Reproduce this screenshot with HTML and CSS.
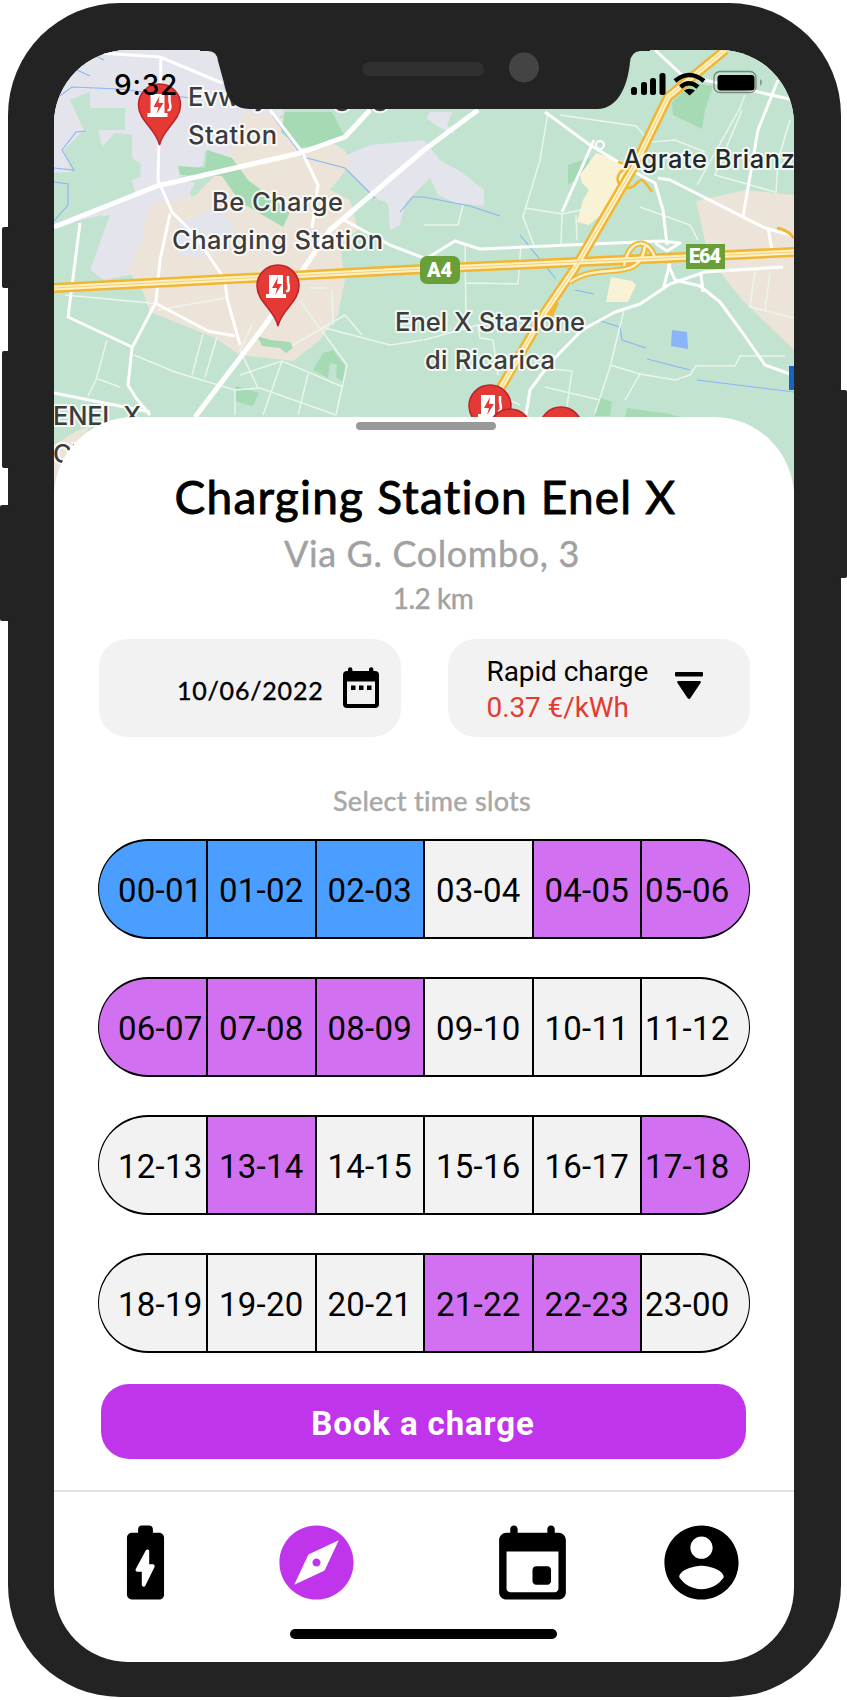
FILE: index.html
```html
<!DOCTYPE html>
<html lang="en">
<head>
<meta charset="utf-8">
<title>Charging Station Enel X</title>
<link rel="stylesheet" href="styles.css">
</head>
<body>
<div class="stage">
  <i class="key key-mute"></i><i class="key key-up"></i><i class="key key-down"></i><i class="key key-power"></i>
  <div class="device">
    <div class="screen">
      <svg class="map" viewBox="54 50 740 440" width="740" height="440">
        <rect x="54" y="50" width="740" height="440" fill="#c1e3cf"/>
        <!-- built-up areas -->
        <g fill="#e3e4ec">
          <path d="M54 50H215L285 112 245 150 215 165 205 150 203 165 178 178 195 200 150 230 140 262 130 275 104 280 90 270 110 215 54 228Z"/>
          <path d="M370 145L424 140 440 160 463 173 484 190 484 206 455 203 438 195 430 178 400 208 375 198 355 178 335 160Z"/>
          <path d="M430 112H452L447 125 455 134 440 128 426 118Z"/>
          <path d="M388 180L407 196 400 225 390 230 388 205 378 190Z"/>
        </g>
        <g fill="#c1e3cf">
          <path d="M70 100L90 92V108L125 108V130H98L102 147 115 133 132 135 132 158 141 164 140 177 132 180 135 194 54 228V173L72 172 64 150 84 130Z"/>
          <path d="M74 222L102 215 97 250 92 262 82 300 54 300V240Z"/>
        </g>
        <g fill="#ece4d9">
          <path d="M245 112L290 120 345 150 350 165 330 190 350 200 358 230 340 245 345 280 338 315 320 340 293 361 240 355 215 338 150 312 143 292 128 270 140 245 150 205 195 196 225 165Z"/>
          <path d="M696 201L745 190 794 195V350L768 325 742 300 720 272 707 250Z"/>
          <path d="M54 445L75 432 90 425 70 470 54 490Z"/>
        </g>
        <g fill="#e3e4ec">
          <path d="M195 183L178 178 176 193 188 196Z"/><path d="M178 225L212 208 232 222 236 235 205 238 202 258 180 255Z"/>
        </g>
        <g fill="#a6dab5">
          <path d="M285 112H332L345 137 325 145 300 148 281 132Z"/>
          <path d="M178 166L205 168 207 150 232 158 248 180 290 212 283 227 240 202 222 176 180 175Z"/>
          <path d="M257 336L270 340 290 342 293 348 286 353 280 348 262 346Z"/>
          <path d="M313 370L323 353 333 350 345 366 343 382 336 377 337 365 330 363 328 378Z"/>
          <path d="M236 386L259 393 253 406 234 401Z"/>
          <path d="M672 103L690 83 713 86 705 110 702 129 673 115Z"/>
          <path d="M568 165L589 158 590 170 568 185Z"/>
          <path d="M598 397L612 402 610 416H595Z"/><path d="M627 408L670 414 690 420H625Z"/>
        </g>
        <path fill="#faf2d5" d="M596 153L630 164 612 198 603 213 589 225 577 222 583 200 589 190 582 183 580 175Z"/>
        <path fill="#faf2d5" d="M611 277L632 281 636 285 628 302 606 302Z"/>
        <path fill="#8ab4f8" d="M672 330L687 332 688 349 671 346Z"/>
        <!-- streams -->
        <g fill="none" stroke="#8ab4f8" stroke-width="1.1">
          <path d="M96 56L104 60M77 70L90 76M54 100L72 87 120 89 190 98"/>
          <path d="M86 131L76 132 62 150 74 170 54 168M54 182L68 184V205L54 221"/>
          <path d="M272 115L303 157 345 168 375 198M400 212L413 197H424"/>
          <path d="M424 197L470 206 500 216M520 235L556 279"/>
          <path d="M597 320L620 327 622 340 646 348M647 359L690 370M697 380L794 392M575 290L594 294"/>
        </g>
        <!-- minor roads -->
        <g fill="none" stroke="#eaf5ee" stroke-width="1.5">
          <path d="M65 295L140 302 158 304M158 310L225 298M107 340L96 380 88 396M98 379L120 387M134 355L175 372 235 390 260 388 336 415M203 334L192 375M217 337L205 377M235 390V415M252 325L240 350 258 388M240 375L282 361 343 387M282 361L263 415M308 374L298 415M300 301L347 365 336 415M293 345L345 315 362 335M325 328L390 345 423 340M332 290L333 325M310 288H326"/>
          <path d="M548 112L540 160 523 217 535 248M525 208L562 214 590 208M562 214L561 245M576 215L577 240M560 115L636 126 650 142 675 140 705 152M745 95L740 108 697 185M742 110L715 175 775 192M790 120L778 160 776 193M463 205L458 225H424M465 245L466 320M466 283L518 284 521 245M424 340L478 325 480 338 493 340 498 375M493 392L520 405M640 207L690 225 698 240"/>
          <path d="M624 310L610 367 595 413M610 365L640 374 625 400M640 374L675 380 690 375 696 366H735L740 356H785M540 368L572 371 565 420M545 387L600 400M755 270L750 307 794 318M770 273L765 310"/>
        </g>
        <!-- main roads -->
        <g fill="none" stroke="#fff" stroke-linejoin="round">
          <path stroke-width="3" d="M54 50L160 57 222 83M161 57L158 180 172 212 195 235 225 280 227 298 240 345M170 214L160 260 156 302 132 348 128 385 136 398 150 415M80 223L68 317 132 347M157 304L208 331 235 336M270 110L302 152 318 185 312 228M344 220L390 245 424 258M54 393L150 412"/>
          <path stroke-width="5" d="M54 227L157 186 300 153 345 137 370 110"/>
          <path stroke-width="5" d="M195 417L265 325 330 230 424 150 478 110"/>
          <path stroke-width="3" d="M594 140L562 212M545 112L590 145 640 175 655 183 663 210 667 245M658 178L670 180 765 228 794 236M655 50L682 75 794 100M778 80L758 130 743 217M768 228L772 250M424 260L455 241 480 249 660 241 680 243 667 251 655 243M783 267L705 272 670 284 640 304 615 312 582 330 550 363 530 390 526 415M668 264L675 280 700 286 720 302 742 332 765 365 790 374M670 263L663 290M701 275L703 292M425 300"/>
          <circle cx="600" cy="145" r="4" stroke-width="2"/>
        </g>
        <!-- motorways -->
        <g fill="none" stroke-linejoin="round">
          <g stroke="#f2b632" stroke-width="10">
            <path d="M54 288L424 269 794 252"/>
            <path d="M725 50L668 97 635 165 575 268 545 312 496 396"/>
            <path stroke-width="2.5" d="M633 164C610 174 616 188 630 188C642 184 638 170 652 192M618 162L628 165"/>
            <path stroke-width="6" d="M570 282C600 260 640 285 645 246M624 266C630 235 650 240 655 258M556 302L549 318"/>
            <path stroke-width="3" d="M777 228Q788 230 794 238"/>
          </g>
          <g stroke="#fdf1c8" stroke-width="5">
            <path d="M54 288L424 269 794 252"/>
            <path d="M725 50L668 97 635 165 575 268 545 312 496 396"/>
            <path stroke-width="2.5" d="M570 282C600 260 640 285 645 246M624 266C630 235 650 240 655 258"/>
          </g>
          <g stroke="#f6cf72" stroke-width="1">
            <path d="M54 288L424 269 794 252"/>
            <path d="M725 50L668 97 635 165 575 268 545 312 496 396"/>
          </g>
        </g>
        <rect x="420" y="256" width="40" height="28" rx="7" fill="#689f38"/>
        <rect x="686" y="244" width="39" height="25" fill="#689f38"/>
        <rect x="789" y="366" width="5" height="24" fill="#1565c0"/>
        <g class="shield">
          <text x="427" y="276.500" textLength="25">A4</text>
          <text x="689" y="263" textLength="32">E64</text>
        </g>
        <!-- charging station pins -->
        <defs>
          <g id="pin">
            <path d="M0 40C-3 24-21 16-21 0A21 21 0 0 1 21 0C21 16 3 24 0 40Z" fill="#e53935" stroke="#b8242a" stroke-width="1.500"/>
            <path d="M-9-11H5V8H8V12H-12V8H-9Z" fill="#fff"/>
            <path d="M0-9L-6 2H-1L-3 9 4-2H-1Z" fill="#e53935"/>
            <path d="M8 5C12 6 11 0 10-4V-10" fill="none" stroke="#fff" stroke-width="2.500"/>
          </g>
        </defs>
        <use href="#pin" x="159.500" y="105"/>
        <use href="#pin" x="278" y="286"/>
        <use href="#pin" x="490" y="406"/>
        <use href="#pin" x="510" y="430"/>
        <use href="#pin" x="561" y="428"/>
        <g class="label">
          <text x="188" y="105.500" textLength="200">Evway Charging</text>
          <text x="188" y="143.500" textLength="89">Station</text>
          <text x="212" y="210.500" textLength="131">Be Charge</text>
          <text x="172" y="248.500" textLength="211">Charging Station</text>
          <text x="395" y="331" textLength="190">Enel X Stazione</text>
          <text x="425" y="369" textLength="130">di Ricarica</text>
          <text x="53" y="425" textLength="88">ENEL X</text>
          <text x="53" y="463" textLength="108">Charging</text>
          <text class="town" x="623" y="167.500" textLength="187">Agrate Brianza</text>
        </g>
      </svg>

      <main class="sheet">
        <div class="grip"></div>
        <h1 class="name">Charging Station Enel X</h1>
        <p class="street">Via G. Colombo, 3</p>
        <p class="distance">1.2 km</p>

        <div class="options">
          <button class="option date">
            <span class="date-text">10/06/2022</span>
            <svg width="38" height="42" viewBox="0 0 38 42">
              <path fill-rule="evenodd" d="M6 4V2.500a2.200 2.200 0 0 1 4.400 0V4H27V2.500a2.200 2.200 0 0 1 4.400 0V4H33a4 4 0 0 1 4 4V37a4 4 0 0 1-4 4H5a4 4 0 0 1-4-4V8a4 4 0 0 1 4-4ZM5 14.500V37H33V14.500Z"/>
              <path d="M9 18.500h4.500v4.500H9zM17 18.500h4.500v4.500H17zM25 18.500h4.500v4.500H25z"/>
            </svg>
          </button>
          <button class="option plan">
            <span class="plan-text">Rapid charge<b class="price">0.37 €/kWh</b></span>
            <svg width="28" height="28" viewBox="0 0 28 28">
              <rect y="0" width="28" height="4.500" rx="1"/><path d="M3.500 9H24.500Q26.500 9 25.500 11L15.500 26Q14 28 12.500 26L2.500 11Q1.500 9 3.500 9Z"/>
            </svg>
          </button>
        </div>

        <p class="hint">Select time slots</p>
        <div class="slots">
          <div class="row"><span class="slot mine">00-01</span><span class="slot mine">01-02</span><span class="slot mine">02-03</span><span class="slot">03-04</span><span class="slot taken">04-05</span><span class="slot taken">05-06</span></div>
          <div class="row"><span class="slot taken">06-07</span><span class="slot taken">07-08</span><span class="slot taken">08-09</span><span class="slot">09-10</span><span class="slot">10-11</span><span class="slot">11-12</span></div>
          <div class="row"><span class="slot">12-13</span><span class="slot taken">13-14</span><span class="slot">14-15</span><span class="slot">15-16</span><span class="slot">16-17</span><span class="slot taken">17-18</span></div>
          <div class="row"><span class="slot">18-19</span><span class="slot">19-20</span><span class="slot">20-21</span><span class="slot taken">21-22</span><span class="slot taken">22-23</span><span class="slot">23-00</span></div>
        </div>
        <button class="book">Book a charge</button>
      </main>

      <nav class="tabs">
        <svg viewBox="0 0 24 24"><path d="M15.670 4H14V3c0-.55-.45-1-1-1h-2c-.55 0-1 .45-1 1v1H8.330C7.600 4 7 4.600 7 5.330v15.330C7 21.400 7.600 22 8.330 22h7.330c.74 0 1.340-.6 1.340-1.330V5.330C17 4.600 16.400 4 15.670 4zm-1.230 9.240l-2.500 5c-.24.48-.94.31-.94-.22V14.500H9.810c-.37 0-.62-.4-.44-.73l2.700-5c.23-.45.93-.28.93.23v3.500h1c.37 0 .6.4.44.74z"/></svg>
        <svg class="active" viewBox="0 0 24 24"><path d="M12 10.900c-.61 0-1.100.49-1.100 1.100s.49 1.100 1.100 1.100c.61 0 1.100-.49 1.100-1.100s-.49-1.100-1.100-1.100zM12 2C6.480 2 2 6.480 2 12s4.480 10 10 10 10-4.480 10-10S17.520 2 12 2zm2.190 12.190L6 18l3.810-8.190L18 6l-3.810 8.190z"/></svg>
        <svg viewBox="0 0 24 24"><path d="M16 13h-3c-.55 0-1 .45-1 1v3c0 .55.45 1 1 1h3c.55 0 1-.45 1-1v-3c0-.55-.45-1-1-1zm0-10v1H8V3c0-.55-.45-1-1-1s-1 .45-1 1v1H5c-1.110 0-2 .9-2 2v14c0 1.100.89 2 2 2h14c1.100 0 2-.9 2-2V6c0-1.100-.9-2-2-2h-1V3c0-.55-.45-1-1-1s-1 .45-1 1zm2 17H6c-.55 0-1-.45-1-1V9h14v10c0 .55-.45 1-1 1z"/></svg>
        <svg viewBox="0 0 24 24"><path d="M12 2C6.480 2 2 6.480 2 12s4.480 10 10 10 10-4.480 10-10S17.520 2 12 2zm0 3c1.660 0 3 1.340 3 3s-1.340 3-3 3-3-1.340-3-3 1.340-3 3-3zm0 14.200c-2.500 0-4.710-1.280-6-3.220.03-1.990 4-3.080 6-3.080 1.990 0 5.970 1.090 6 3.080-1.290 1.940-3.500 3.220-6 3.220z"/></svg>
      </nav>
      <div class="home"></div>
    </div>
  </div>

  <svg class="notch" viewBox="200 48 450 62" width="450" height="62">
    <path fill="#232323" d="M200 48H650V51H640Q631 52 630 62C628 84 619 109 597 109H250C230 109 226 93 224 83L218 61Q217 51 208 51H200Z"/>
    <rect x="362" y="62" width="122" height="14" rx="7" fill="#303030"/>
    <circle cx="524" cy="67.500" r="15" fill="#444"/>
  </svg>
  <span class="clock">9:32</span>
  <svg class="status" viewBox="630 68 136 30" width="136" height="30">
    <rect x="631" y="87" width="6" height="8" rx="2.500"/><rect x="641" y="82" width="6" height="13" rx="2.500"/><rect x="650" y="78" width="6" height="17" rx="2.500"/><rect x="659.500" y="73" width="6" height="22" rx="2.500"/>
    <g fill="none" stroke="#000" stroke-width="4.500"><path d="M675 81Q689 69 704 81"/><path d="M680.500 87Q689 79.500 698 87"/></g>
    <path d="M689.500 95.500L684 90.500Q689.500 87 695 90.500Z"/>
    <rect x="714" y="71.500" width="42" height="21" rx="6" fill="none" stroke="#555" stroke-opacity=".65" stroke-width="1.300"/>
    <rect x="717.500" y="75" width="37" height="15.500" rx="3"/>
    <path d="M760 79Q764 82 760 86Z" fill="#839a8e"/>
  </svg>
</div>
</body>
</html>
```
FILE: styles.css
```css
* { box-sizing: border-box; }
body { margin: 0; background: #fff; }
p, h1 { margin: 0; }
button { border: 0; color: #000; font: inherit; }

.stage { position: relative; width: 847px; height: 1700px; padding: 3px 6px 3px 8px; overflow: hidden; font-family: Roboto, sans-serif; font-variant-ligatures: none; color: #000; }

/* hardware */
.device { width: 833px; height: 1694px; padding: 47px 47px 35px 46px; border-radius: 112px; background: #232323; }
.screen { display: flex; flex-direction: column; width: 740px; height: 1612px; overflow: hidden; border-radius: 74px; background: #fff; }
.key { position: absolute; left: 2px; width: 10px; border-radius: 2px; background: #232323; }
.key-mute { top: 227px; height: 61px; }
.key-up { top: 351px; height: 117px; }
.key-down { left: 0; top: 505px; height: 116px; }
.key-power { left: 837px; top: 390px; height: 188px; }
.notch { position: absolute; left: 200px; top: 48px; }
.clock { position: absolute; left: 114px; top: 68px; font: 500 28px/34px Inter, sans-serif; letter-spacing: .8px; }
.status { position: absolute; left: 630px; top: 68px; }

/* map */
.map { flex: none; display: block; }
.label { font: 500 25.5px Inter, sans-serif; fill: #3c3c3c; stroke: #fff; stroke-width: 4px; stroke-opacity: .8; paint-order: stroke; stroke-linejoin: round; }
.town { fill: #24272c; }
.shield { font: 900 20px Roboto, sans-serif; fill: #fff; }

/* bottom sheet */
.sheet { position: relative; flex: none; display: flex; flex-direction: column; align-items: center; height: 1073px; margin-top: -73px; padding-top: 5px; border-radius: 80px 80px 0 0; background: #fff; }
.grip { width: 140px; height: 8px; margin-left: 4px; border-radius: 4px; background: #999; }
.name { height: 60px; margin: 37px 0 0 3px; font: 46px/60px Lato, sans-serif; letter-spacing: 1.2px; -webkit-text-stroke: .9px #000; white-space: nowrap; }
.street { height: 44px; margin: 4px 0 0 16px; font: 36px/44px Lato, sans-serif; letter-spacing: .6px; color: #a1a1a1; -webkit-text-stroke: .4px #a1a1a1; }
.distance { height: 36px; margin: 5px 0 0 18px; font: 28px/36px Lato, sans-serif; letter-spacing: -.5px; color: #a1a1a1; -webkit-text-stroke: .4px #a1a1a1; }

.options { display: flex; gap: 47px; margin-top: 23px; }
.option { display: flex; align-items: center; width: 302px; height: 98px; border-radius: 28px; background: #f2f2f2; }
.date { justify-content: flex-end; gap: 18px; padding: 0 21px 0 0; }
.date-text { padding-top: 3px; font: 25px/32px Lato, sans-serif; letter-spacing: .8px; -webkit-text-stroke: .4px #000; }
.plan { justify-content: space-between; padding: 0 47px 0 39px; text-align: left; }
.plan svg { margin-bottom: 5px; }
.plan-text { padding-top: 3px; font-size: 28px; line-height: 36px; letter-spacing: -.1px; white-space: nowrap; }
.price { display: block; font-weight: 400; color: #e53a30; }

.hint { height: 36px; margin: 46px 0 0 16px; font: 27px/36px Lato, sans-serif; letter-spacing: .3px; color: #a8a8a8; -webkit-text-stroke: .5px #a8a8a8; }
.slots { display: grid; gap: 38px; margin-top: 20px; }
.row { display: flex; width: 652px; height: 100px; }
.slot { flex: none; width: 108.5px; display: flex; align-items: center; padding: 3px 0 0 11px; border: solid #000; border-width: 2px 2px 2px 0; background: #f2f2f2; font-size: 33px; letter-spacing: .25px; white-space: nowrap; }
.slot:first-child { width: 110px; border-left-width: 1px; border-radius: 50px 0 0 50px; padding-left: 19px; }
.slot:last-child { width: 108px; border-right-width: 1px; border-radius: 0 50px 50px 0; padding-left: 3px; }
.mine { background: #4a9eff; }
.taken { background: #d270f2; }
.book { width: 645px; height: 75px; margin: 31px 2px 0 0; padding: 3px 0 0; border-radius: 28px; background: #c035eb; color: #fff; font-size: 33px; font-weight: 700; letter-spacing: .9px; }

/* bottom navigation */
.tabs { display: flex; flex: none; height: 118px; padding: 26px 0 0 47px; border-top: 2px solid #e2e2e2; }
.tabs svg { width: 89px; height: 89px; margin-right: 82px; }
.tabs svg + svg + svg { margin-left: 45px; }
.tabs svg + svg + svg + svg { margin-left: -2px; margin-right: 0; }
.active { fill: #c035eb; }
.home { align-self: center; width: 267px; height: 10px; margin: 21px 2px 0 0; border-radius: 5px; background: #000; }
```
